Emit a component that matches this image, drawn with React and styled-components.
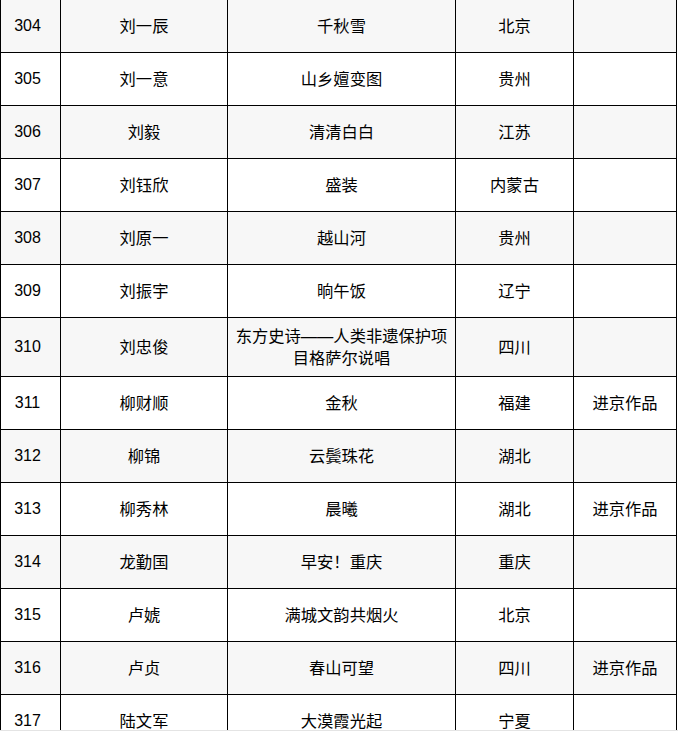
import React from "react";
import styled, { createGlobalStyle } from "styled-components";

const Global = createGlobalStyle`
  html, body { margin: 0; padding: 0; background: #fff; }
  body { font-family: "Liberation Sans", "Noto Sans CJK SC", sans-serif; }
`;

const Viewport = styled.div`
  width: 678px;
  height: 730px;
  overflow: hidden;
  border-bottom: 1px solid #e4e4e4;
  background: #fff;
`;

const Table = styled.table`
  margin-top: -1px;
  border-collapse: separate;
  border-spacing: 0;
  table-layout: fixed;
  width: 677px;
  border-top: 1px solid #000;
  border-left: 1px solid #000;
  font-size: 16px;
  color: #000;
`;

const Row = styled.tr`
  background: ${(p) => (p.$shaded ? "#f7f7f7" : "#ffffff")};
`;

const Cell = styled.td`
  box-sizing: border-box;
  width: ${(p) => p.$w}px;
  height: 53px;
  padding: ${(p) => (p.$num ? "7px 8px 7px 2px" : "7px 5px")};
  line-height: 22px;
  font-size: ${(p) => (p.$num ? "16px" : "16.3px")};
  text-align: center;
  vertical-align: middle;
  border-right: 1px solid #000;
  border-bottom: 1px solid #000;
  word-break: break-all;
`;

const widths = [60, 167, 228, 118, 103];

const data = [
  ["304", "刘一辰", "千秋雪", "北京", ""],
  ["305", "刘一意", "山乡嬗变图", "贵州", ""],
  ["306", "刘毅", "清清白白", "江苏", ""],
  ["307", "刘钰欣", "盛装", "内蒙古", ""],
  ["308", "刘原一", "越山河", "贵州", ""],
  ["309", "刘振宇", "晌午饭", "辽宁", ""],
  ["310", "刘忠俊", "东方史诗——人类非遗保护项目格萨尔说唱", "四川", ""],
  ["311", "柳财顺", "金秋", "福建", "进京作品"],
  ["312", "柳锦", "云鬓珠花", "湖北", ""],
  ["313", "柳秀林", "晨曦", "湖北", "进京作品"],
  ["314", "龙勤国", "早安！重庆", "重庆", ""],
  ["315", "卢婋", "满城文韵共烟火", "北京", ""],
  ["316", "卢贞", "春山可望", "四川", "进京作品"],
  ["317", "陆文军", "大漠霞光起", "宁夏", ""],
];

export default function App() {
  return (
    <>
      <Global />
      <Viewport>
        <Table>
          <tbody>
            {data.map((r, i) => (
              <Row key={r[0]} $shaded={i % 2 === 0}>
                {r.map((c, j) => (
                  <Cell key={j} $w={widths[j]} $num={j === 0}>
                    {c}
                  </Cell>
                ))}
              </Row>
            ))}
          </tbody>
        </Table>
      </Viewport>
    </>
  );
}
